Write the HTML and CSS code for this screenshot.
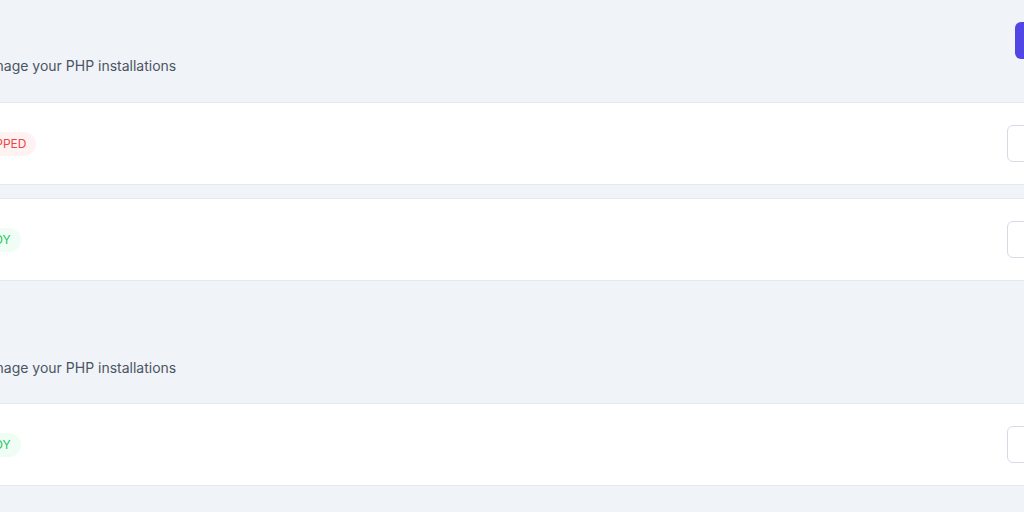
FILE: index.html
```html
<!DOCTYPE html>
<html lang="en">
<head>
<meta charset="utf-8">
<title>PHP Versions</title>
<link rel="stylesheet" href="styles.css">
</head>
<body>
<main class="page">
  <section class="section">
    <header class="section-head">
      <div class="head-text">
        <p class="subtitle">Manage your PHP installations</p>
      </div>
      <button class="btn-primary">Install PHP</button>
    </header>
    <div class="list">
      <div class="card">
        <span class="badge badge-red">Stopped</span>
        <button class="btn-outline">Manage</button>
      </div>
      <div class="card">
        <span class="badge badge-green">Ready</span>
        <button class="btn-outline">Manage</button>
      </div>
    </div>
  </section>
  <section class="section">
    <header class="section-head">
      <div class="head-text">
        <p class="subtitle">Manage your PHP installations</p>
      </div>
    </header>
    <div class="list">
      <div class="card">
        <span class="badge badge-green">Ready</span>
        <button class="btn-outline">Manage</button>
      </div>
    </div>
  </section>
</main>
</body>
</html>
```

FILE: styles.css
```css
html, body {
  margin: 0;
  padding: 0;
  overflow: hidden;
  background: #f0f3f8;
  font-family: Inter, "Noto Sans", "Liberation Sans", sans-serif;
}

.page {
  margin-left: -60px;
  width: 1200px;
}

.section {
  margin-bottom: 21px;
}

.section + .section .section-head {
  margin-bottom: 25px;
}

.section-head {
  display: flex;
  justify-content: space-between;
  align-items: flex-start;
  padding-left: 35px;
  margin-bottom: 26px;
}

.head-text {
  padding-top: 56px;
}

.subtitle {
  margin: 0;
  font-size: 14px;
  line-height: 20px;
  color: #4b5563;
}

.btn-primary {
  margin-top: 22px;
  width: 125px;
  height: 37px;
  border: none;
  border-radius: 6px;
  background: #4f46e5;
  color: #fff;
  font: 500 14px Inter, sans-serif;
}

.list {
  display: flex;
  flex-direction: column;
  gap: 13px;
}

.card {
  display: flex;
  align-items: center;
  justify-content: space-between;
  height: 81px;
  padding: 0 24px 0 21px;
  background: #fff;
  border-top: 1px solid #e2e8f0;
  border-bottom: 1px solid #e2e8f0;
}

.badge {
  display: inline-block;
  padding: 4px 10px;
  border-radius: 999px;
  font-size: 12px;
  line-height: 16px;
  text-transform: uppercase;
}

.badge-red {
  background: #fef2f2;
  color: #ef4444;
}

.badge-green {
  background: #f0fdf4;
  color: #22c55e;
}

.btn-outline {
  width: 109px;
  height: 37px;
  border: 1px solid #d5dbe5;
  border-radius: 6px;
  background: #fff;
  color: #374151;
  font: 500 14px Inter, sans-serif;
}
```
